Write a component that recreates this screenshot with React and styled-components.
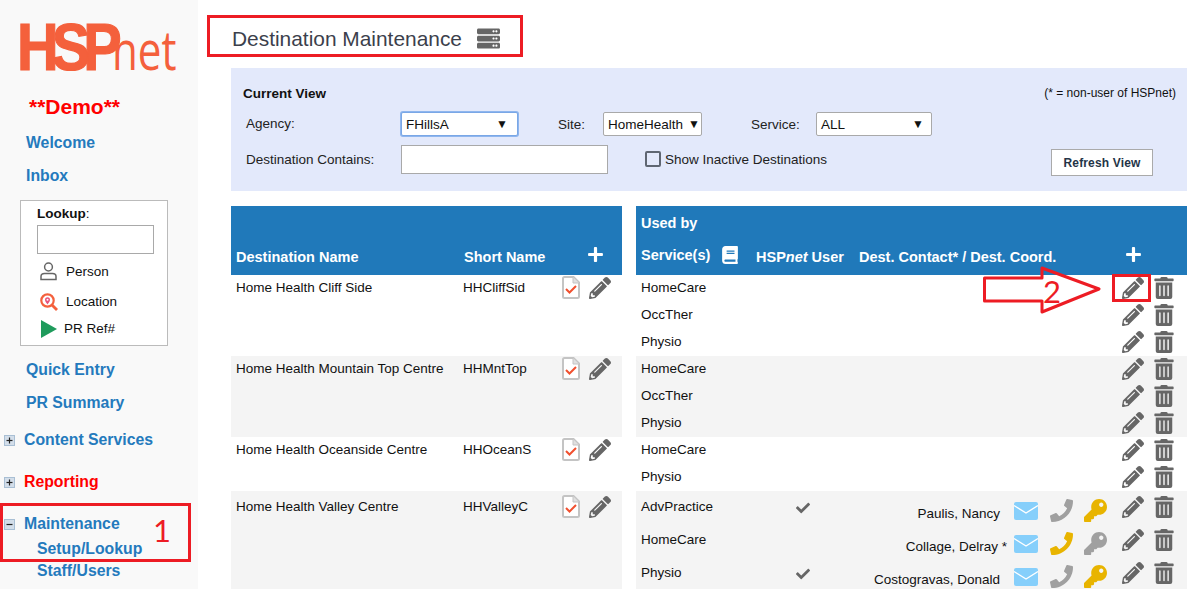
import React from "react";
import styled, { createGlobalStyle } from "styled-components";
import { FaPencilAlt, FaTrashAlt, FaCheck, FaPhoneAlt, FaKey, FaServer, FaBook, FaPlus } from "react-icons/fa";

const Global = createGlobalStyle`
  html, body { margin: 0; padding: 0; background: #fff; overflow: hidden; }
  body { font-family: "Liberation Sans", Arial, sans-serif; font-size: 13.5px; color: #111; }
`;
const Page = styled.div`
  position: relative; display: flex; width: 1190px; height: 589px; overflow: hidden;
`;
const Sidebar = styled.aside`
  width: 198px; flex: none; background: #f9f9f9; display: flex; flex-direction: column; height: 589px;
`;
const Logo = styled.div`
  display: flex; align-items: baseline; height: 47px; margin: 23px 0 0 17px; line-height: 47px; color: #f4603c; white-space: nowrap;
`;
const LogoHSP = styled.span`
  display: inline-block; width: 95px; font-size: 67px; font-weight: 700; letter-spacing: -8px; transform: scaleX(.86); transform-origin: 0 50%; -webkit-text-stroke: 1.2px #f4603c;
`;
const LogoNet = styled.span`
  display: inline-block; font-family: "Open Sans", sans-serif; font-size: 54px; font-weight: 400; transform: scaleX(.78); transform-origin: 0 50%;
`;
const Demo = styled.div`
  margin: 26px 0 0 29px; font-size: 21px; line-height: 22px; font-weight: 700; color: #f00;
`;
const NavLink = styled.div`
  display: flex; align-items: center; margin-top: ${p => p.$top}px; padding-left: ${p => p.$left}px; font-size: 15.8px; line-height: 20px; font-weight: 700; color: ${p => p.$red ? "#f00" : "#247abd"}; white-space: nowrap;
`;
const Toggle = styled.svg`
  width: 11px; height: 11px; margin-right: 9px; margin-left: -20px; flex: none;
`;
const LookupBox = styled.div`
  width: 148px; height: 146px; box-sizing: border-box; margin: 14px 0 0 20px; padding: 5px 0 0 16px; border: 1px solid #bbb; background: #fff; color: #111;
`;
const LookupTitle = styled.div`
  line-height: 16px; b { font-weight: 700; }
`;
const LookupInput = styled.div`
  width: 117px; height: 29px; box-sizing: border-box; margin: 3px 0 1px; border: 1px solid #a9a9a9; background: #fff;
`;
const LookupRow = styled.div`
  display: flex; align-items: center; height: ${p => p.$h}px; margin-left: ${p => p.$icon || 3}px; gap: ${p => p.$gap}px; white-space: nowrap;
`;
const Main = styled.main`
  flex: 1; padding: 15px 0 0 9px; min-width: 0;
`;
const TitleBox = styled.div`
  width: 316px; height: 42px; box-sizing: border-box; display: flex; align-items: center; gap: 15px; padding: 5px 0 0 22px; border: 3px solid #ed1c24;
`;
const Title = styled.h1`
  margin: 0; font-size: 20.9px; font-weight: 400; color: #3c3f4c; white-space: nowrap;
`;
const Panel = styled.section`
  width: 956px; height: 123px; box-sizing: border-box; margin: 11px 0 15px 24px; padding: 17px 11px 0 12px; background: #e3e9fb;
`;
const PanelHead = styled.div`
  display: flex; justify-content: space-between; align-items: center; height: 16px;
`;
const PanelTitle = styled.b`font-size: 13.5px; font-weight: 700;`;
const Note = styled.span`font-size: 12px;`;
const FieldRow = styled.div`
  display: flex; align-items: center; margin-top: ${p => p.$top}px; padding-left: 3px; color: #222;
`;
const Label = styled.span`
  width: ${p => p.$w}px; flex: none; white-space: nowrap; position: relative; top: ${p => p.$up ? -1 : 0}px;
`;
const Select = styled.div`
  width: ${p => p.$w}px; height: 24px; flex: none; box-sizing: border-box; display: flex; justify-content: space-between; align-items: center; padding: 0 ${p => p.$pr}px 0 4px; margin-right: ${p => p.$mr || 0}px; background: #fff; border: 1px solid ${p => p.$focus ? "#7aa7e6" : "#a9a9a9"}; border-radius: 2px; box-shadow: ${p => p.$focus ? "0 0 0 1px #8fb6ee" : "none"}; color: #111;
`;
const Arrow = styled.span`font-size: 12px; color: #111;`;
const TextInput = styled.div`
  width: 207px; height: 29px; flex: none; box-sizing: border-box; border: 1px solid #a9a9a9; background: #fff;
`;
const CheckBox = styled.span`
  width: 16px; height: 16px; flex: none; box-sizing: border-box; margin: 0 4px 0 37px; border: 2px solid #5f6672; border-radius: 2px; background: #e3e9fb;
`;
const RefreshButton = styled.button`
  width: 102px; height: 27px; margin-left: 204px; margin-top: 7px; padding: 0; background: #fff; border: 1px solid #aaa; font: 700 12px "Liberation Sans", Arial, sans-serif; color: #243447; letter-spacing: .15px;
`;
const Tables = styled.div`
  display: flex; gap: 14px; margin-left: 24px; width: 956px;
`;
const LeftTable = styled.div`width: 391px; flex: none;`;
const RightTable = styled.div`width: 551px; flex: none;`;
const leftCols = "227px 99px 27px 38px";
const rightCols = "115px 103px 155px 36px 34px 38px 33px 32px";
const actionCols = "115px 103px 155px 36px 34px 38px 31px 34px";
const HeadLeft = styled.div`
  display: grid; grid-template-columns: ${leftCols}; height: 69px; box-sizing: border-box; padding-left: 5px; align-items: end; background: #2079ba; color: #fff; font-weight: 700; font-size: 14.5px;
`;
const HeadCell = styled.div`
  padding-bottom: ${p => p.$pb ?? 10}px; white-space: nowrap; display: flex; align-items: center; gap: ${p => p.$gap || 0}px; margin-left: ${p => p.$ml || 0}px;
  i { font-style: italic; }
`;
const HeadRight = styled.div`
  height: 69px; box-sizing: border-box; padding: 9px 0 0 5px; background: #2079ba; color: #fff; font-weight: 700; font-size: 14.5px;
`;
const UsedBy = styled.div`line-height: 16px;`;
const HeadRightRow = styled.div`
  display: grid; grid-template-columns: ${rightCols}; align-items: end; height: 35px;
`;
const LeftGroup = styled.div`
  display: grid; grid-template-columns: ${leftCols}; height: ${p => p.$h}px; box-sizing: border-box; padding: ${p => p.$pad}px 0 0 5px; background: ${p => p.$shade ? "#f4f4f4" : "#fff"}; align-items: start; line-height: 16px; color: #111;
`;
const RowIcon = styled.span`
  display: flex; line-height: 0; margin-top: ${p => p.$mt || 0}px; color: #666;
`;
const Group = styled.div`background: ${p => p.$shade ? "#f4f4f4" : "#fff"};`;
const ServiceRow = styled.div`
  display: grid; grid-template-columns: ${actionCols}; height: ${p => p.$h || 27}px; padding-left: 5px; align-items: center; white-space: nowrap;
`;
const ServiceName = styled.span`
  padding-bottom: 3px; grid-column: 1;
`;
const Contact = styled.span`
  text-align: right; padding: 11px ${p => p.$outdent ? 7 : 14}px 0 0; grid-column: 3;
`;
const CheckCell = styled.span`
  grid-column: 2; padding-left: 40px; line-height: 0; color: #666;
`;
const ActionCell = styled.span`
  display: flex; line-height: 0; color: ${p => p.$c || "#666"}; grid-column: ${p => p.$col}; padding-top: ${p => p.$pt || 0}px; padding-bottom: ${p => p.$pb || 0}px;
`;
const PhoneGlyph = styled(FaPhoneAlt)`transform: scaleX(-1);`;
const Annotation = styled.svg`
  position: absolute; left: 0; top: 0; pointer-events: none;
`;
const Callout = styled.span`
  position: absolute; left: ${p => p.$x}px; top: ${p => p.$y}px; font-family: Lato, sans-serif; font-size: 31px; line-height: 30px; color: #ed1c24;
`;

const Envelope = () => (
  <svg width="24" height="18" viewBox="0 0 24 18"><rect width="24" height="18" rx="2" fill="#86cffb"/><path d="M0 3.5 L12 11 L24 3.5" fill="none" stroke="#fff" strokeWidth="1.4"/></svg>
);
const DocCheck = () => (
  <svg width="18" height="23" viewBox="0 0 18 23"><path d="M1 2.5Q1 1 2.5 1H11.5L17 6.5V20.5Q17 22 15.5 22H2.5Q1 22 1 20.5Z" fill="#fff" stroke="#c4c4c4" strokeWidth="2"/><path d="M11 1V7H17" fill="#e0e0e0" stroke="#c4c4c4" strokeWidth="1"/><path d="M4 13L7.5 16.5L14 10" fill="none" stroke="#f1502f" strokeWidth="2"/></svg>
);
const PersonIcon = () => (
  <svg width="17" height="19" viewBox="0 0 17 19"><circle cx="8.5" cy="5" r="3.9" fill="none" stroke="#666" strokeWidth="1.5"/><path d="M1 17.6V14.5Q1 11.5 4.5 11.5H12.5Q16 11.5 16 14.5V17.6Z" fill="none" stroke="#666" strokeWidth="1.5"/></svg>
);
const LocationIcon = () => (
  <svg width="18" height="18" viewBox="0 0 18 18"><circle cx="7.5" cy="7.5" r="6.2" fill="none" stroke="#f4603c" strokeWidth="2.2"/><path d="M12 12L17 17" stroke="#f4603c" strokeWidth="2.8"/><path d="M7.5 11.5C6 9.5 5 8.3 5 6.8A2.5 2.5 0 0 1 10 6.8C10 8.3 9 9.5 7.5 11.5Z" fill="#e8527a"/><circle cx="7.5" cy="6.8" r="1" fill="#fff"/></svg>
);
const PlayIcon = () => (
  <svg width="16" height="18" viewBox="0 0 16 18"><path d="M0 0L16 9L0 18Z" fill="#1f9b5c"/></svg>
);
const ToggleIcon = ({ open }) => (
  <Toggle viewBox="0 0 11 11"><rect x=".5" y=".5" width="10" height="10" fill="#d3deea" stroke="#a9bfd4"/><path d="M2.5 5.5H8.5" stroke="#222" strokeWidth="1.2"/>{!open && <path d="M5.5 2.5V8.5" stroke="#222" strokeWidth="1.2"/>}</Toggle>
);

const Actions = () => (
  <>
    <ActionCell $col={7} $pb={1}><FaPencilAlt size={22} /></ActionCell>
    <ActionCell $col={8} $pb={1}><FaTrashAlt size={22} /></ActionCell>
  </>
);

const groups = [
  { name: "Home Health Cliff Side", short: "HHCliffSid", services: ["HomeCare", "OccTher", "Physio"], shade: false },
  { name: "Home Health Mountain Top Centre", short: "HHMntTop", services: ["HomeCare", "OccTher", "Physio"], shade: true },
  { name: "Home Health Oceanside Centre", short: "HHOceanS", services: ["HomeCare", "Physio"], shade: false },
];
const contacts = [
  { service: "AdvPractice", user: true, name: "Paulis, Nancy", phone: "#a0a0a0", key: "#e8b400" },
  { service: "HomeCare", user: false, name: "Collage, Delray *", phone: "#e8b400", key: "#a0a0a0" },
  { service: "Physio", user: true, name: "Costogravas, Donald", phone: "#a0a0a0", key: "#e8b400" },
];

const DestRow = ({ name, short, h, shade, pad }) => (
  <LeftGroup $h={h} $shade={shade} $pad={pad}>
    <span>{name}</span>
    <span>{short}</span>
    <RowIcon $mt={-4}><DocCheck /></RowIcon>
    <RowIcon $mt={-3}><FaPencilAlt size={22} /></RowIcon>
  </LeftGroup>
);

export default function App() {
  return (
    <Page>
      <Global />
      <Sidebar>
        <Logo><LogoHSP>HSP</LogoHSP><LogoNet>net</LogoNet></Logo>
        <Demo>**Demo**</Demo>
        <NavLink $top={15} $left={26}>Welcome</NavLink>
        <NavLink $top={13} $left={26}>Inbox</NavLink>
        <LookupBox>
          <LookupTitle><b>Lookup</b>:</LookupTitle>
          <LookupInput />
          <LookupRow $h={33} $gap={9}><PersonIcon />Person</LookupRow>
          <LookupRow $h={27} $gap={8}><LocationIcon />Location</LookupRow>
          <LookupRow $h={27} $gap={7} $icon={4}><PlayIcon />PR Ref#</LookupRow>
        </LookupBox>
        <NavLink $top={14} $left={26}>Quick Entry</NavLink>
        <NavLink $top={13} $left={26}>PR Summary</NavLink>
        <NavLink $top={17} $left={24}><ToggleIcon />Content Services</NavLink>
        <NavLink $top={22} $left={24} $red><ToggleIcon />Reporting</NavLink>
        <NavLink $top={22} $left={24}><ToggleIcon open />Maintenance</NavLink>
        <NavLink $top={5} $left={37}>Setup/Lookup</NavLink>
        <NavLink $top={2} $left={37}>Staff/Users</NavLink>
      </Sidebar>
      <Main>
        <TitleBox>
          <Title>Destination Maintenance</Title>
          <FaServer size={23} color="#666" />
        </TitleBox>
        <Panel>
          <PanelHead><PanelTitle>Current View</PanelTitle><Note>(* = non-user of HSPnet)</Note></PanelHead>
          <FieldRow $top={11}>
            <Label $w={155} $up>Agency:</Label>
            <Select $w={117} $pr={9} $focus $mr={40}>FHillsA<Arrow>▼</Arrow></Select>
            <Label $w={45}>Site:</Label>
            <Select $w={99} $pr={1} $mr={49}>HomeHealth<Arrow>▼</Arrow></Select>
            <Label $w={65}>Service:</Label>
            <Select $w={116} $pr={7}>ALL<Arrow>▼</Arrow></Select>
          </FieldRow>
          <FieldRow $top={6}>
            <Label $w={155}>Destination Contains:</Label>
            <TextInput />
            <CheckBox />
            <Label $w={182}>Show Inactive Destinations</Label>
            <RefreshButton>Refresh View</RefreshButton>
          </FieldRow>
        </Panel>
        <Tables>
          <LeftTable>
            <HeadLeft>
              <HeadCell>Destination Name</HeadCell>
              <HeadCell $ml={1}>Short Name</HeadCell>
              <HeadCell />
              <HeadCell $pb={12} $ml={-2}><FaPlus size={17} /></HeadCell>
            </HeadLeft>
            {groups.map(g => (
              <DestRow key={g.short} name={g.name} short={g.short} shade={g.shade} h={g.services.length * 27} pad={5} />
            ))}
            <DestRow name="Home Health Valley Centre" short="HHValleyC" shade h={98} pad={8} />
          </LeftTable>
          <RightTable>
            <HeadRight>
              <UsedBy>Used by</UsedBy>
              <HeadRightRow>
                <HeadCell $gap={11} $pb={2}>Service(s)<FaBook size={18} /></HeadCell>
                <HeadCell $pb={1}><span>HSP<i>net</i> User</span></HeadCell>
                <HeadCell $pb={1}>Dest. Contact* / Dest. Coord.</HeadCell>
                <span /><span /><span />
                <HeadCell $pb={3} $ml={3}><FaPlus size={17} /></HeadCell>
              </HeadRightRow>
            </HeadRight>
            {groups.map(g => (
              <Group key={g.short} $shade={g.shade}>
                {g.services.map(s => (
                  <ServiceRow key={s}><ServiceName>{s}</ServiceName><Actions /></ServiceRow>
                ))}
              </Group>
            ))}
            <Group $shade>
              {contacts.map(c => (
                <ServiceRow key={c.service} $h={33}>
                  <ServiceName>{c.service}</ServiceName>
                  {c.user && <CheckCell><FaCheck size={14} /></CheckCell>}
                  <Contact $outdent={!c.user}>{c.name}</Contact>
                  <ActionCell $col={4} $pt={6}><Envelope /></ActionCell>
                  <ActionCell $col={5} $pt={6} $c={c.phone}><PhoneGlyph size={23} /></ActionCell>
                  <ActionCell $col={6} $pt={6} $c={c.key}><FaKey size={23} /></ActionCell>
                  <Actions />
                </ServiceRow>
              ))}
            </Group>
          </RightTable>
        </Tables>
      </Main>
      <Annotation width="1190" height="589" viewBox="0 0 1190 589" fill="none" stroke="#ed1c24" strokeWidth="3">
        <path d="M1.5 504.5H189.5V560.5H1.5Z" />
        <path d="M1113.5 275.5H1149.5V300.5H1113.5Z" />
        <path d="M984.5 278H1042V268L1099 289L1042 312V301H984.5Z" strokeLinejoin="round" />
      </Annotation>
      <Callout $x={153} $y={515}>1</Callout>
      <Callout $x={1043} $y={276}>2</Callout>
    </Page>
  );
}
